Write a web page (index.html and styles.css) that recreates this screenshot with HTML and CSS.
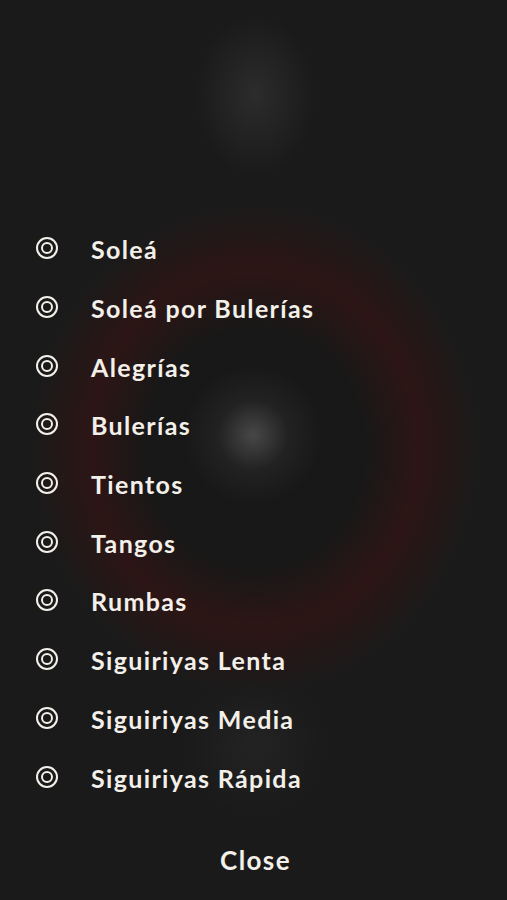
FILE: index.html
```html
<!DOCTYPE html>
<html lang="es">
<head>
    <meta charset="UTF-8">
    <meta name="viewport" content="width=device-width, initial-scale=1.0">
    <title>Palos</title>
    <link rel="stylesheet" href="styles.css">
</head>
<body>

    <div class="screen">
        <!-- List of palos -->
        <ul class="palo-list">
            <li class="palo"><span class="ring"></span>Soleá</li>
            <li class="palo"><span class="ring"></span>Soleá por Bulerías</li>
            <li class="palo"><span class="ring"></span>Alegrías</li>
            <li class="palo"><span class="ring"></span>Bulerías</li>
            <li class="palo"><span class="ring"></span>Tientos</li>
            <li class="palo"><span class="ring"></span>Tangos</li>
            <li class="palo"><span class="ring"></span>Rumbas</li>
            <li class="palo"><span class="ring"></span>Siguiriyas Lenta</li>
            <li class="palo"><span class="ring"></span>Siguiriyas Media</li>
            <li class="palo"><span class="ring"></span>Siguiriyas Rápida</li>
        </ul>

        <!-- Close button -->
        <div class="footer">
            <button class="close-btn">Close</button>
        </div>
    </div>

</body>
</html>
```

FILE: styles.css
```css
body {
    margin: 0;
    padding: 0;
    background-color: #1a1a1a;
    font-family: Lato, "Open Sans", sans-serif;
}

.screen {
    width: 507px;
    height: 900px;
    box-sizing: border-box;
    padding-top: 220px;
    background-color: #1a1a1a;
    background-image:
        radial-gradient(circle 70px at 253px 435px, rgba(74, 74, 74, 0.95), rgba(44, 44, 44, 0.5) 50%, rgba(26, 26, 26, 0) 100%),
        radial-gradient(ellipse 60px 80px at 255px 95px, rgba(46, 46, 46, 0.9), rgba(26, 26, 26, 0) 100%),
        radial-gradient(ellipse 70px 70px at 255px 745px, rgba(36, 36, 36, 0.9), rgba(26, 26, 26, 0) 100%),
        radial-gradient(ellipse 225px 245px at 255px 448px, rgba(22, 22, 22, 0.6) 48%, rgba(50, 20, 20, 0.8) 73%, rgba(26, 26, 26, 0) 100%);
}

.palo-list {
    list-style: none;
    margin: 0;
    padding: 0;
}

.palo {
    display: flex;
    align-items: center;
    height: 58.7px;
    padding-left: 36px;
    color: #f3efe9;
    font-size: 25px;
    font-weight: 700;
    letter-spacing: 1.35px;
}

.ring {
    width: 18px;
    height: 18px;
    margin-right: 33px;
    margin-top: -2px;
    border: 2px solid #f3efe9;
    border-radius: 50%;
    position: relative;
}

.ring::after {
    content: "";
    position: absolute;
    left: 3px;
    top: 3px;
    width: 8px;
    height: 8px;
    border: 2px solid #f3efe9;
    border-radius: 50%;
}

.footer {
    display: flex;
    justify-content: center;
    padding-top: 37px;
}

.close-btn {
    background: none;
    border: none;
    color: #f3efe9;
    font-family: inherit;
    font-size: 26px;
    font-weight: 700;
    letter-spacing: 1.4px;
    padding: 0;
    margin-left: 4px;
    cursor: pointer;
}
```
